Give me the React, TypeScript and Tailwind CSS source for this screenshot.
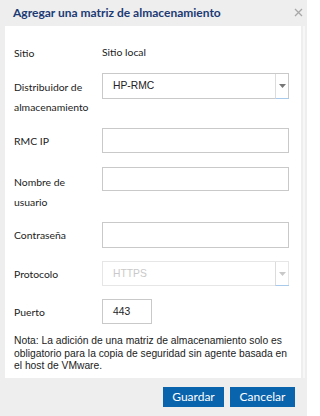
import React from "react";

const lbl = "w-[88px] shrink-0 text-[10.4px] leading-[20px] text-[#222]";
const inputCls = "w-[187px] border border-[#c9c9c9] bg-white";
const arial = { fontFamily: "'Liberation Sans', Arial, sans-serif" };

function Caret({ light }: { light?: boolean }) {
  return (
    <div className="w-[14px] self-stretch flex items-center justify-center border-l border-[#dcdcdc] border-b-[1px] border-b-[#a9c9ea] -mb-px -mr-px">
      <svg width="7" height="4" viewBox="0 0 7 4">
        <path d="M0 0 L7 0 L3.5 4 Z" fill={light ? "#c8c8c8" : "#777"} />
      </svg>
    </div>
  );
}

export default function App() {
  return (
    <div
      className="w-[307px] h-[416px] bg-[#eeeeee] flex flex-col overflow-hidden"
      style={{ fontFamily: "Lato, 'Liberation Sans', sans-serif" }}
    >
      <div className="h-[26px] flex items-center justify-between pl-[13px] pr-[4px]">
        <span className="text-[12px] font-bold text-[#1c3a74]">
          Agregar una matriz de almacenamiento
        </span>
        <svg width="9" height="9" viewBox="0 0 9 9" className="mb-[1px]">
          <path d="M1 1 L8 8 M8 1 L1 8" stroke="#a8a8a8" strokeWidth="1.3" />
        </svg>
      </div>
      <div className="flex flex-1">
        <div className="w-[5px] shrink-0" />
        <div className="w-[296px] h-[352px] bg-white pl-[9px] pt-[16px]">
          <div className="flex items-center h-[20px] mt-[1px]">
            <div className={lbl}>Sitio</div>
            <div className="text-[10.4px] text-[#222]">Sitio local</div>
          </div>

          <div className="flex items-start mt-[10px]">
            <div className={lbl + " pt-[4px]"}>
              Distribuidor de
              <br />
              almacenamiento
            </div>
            <div className={inputCls + " h-[26px] flex items-center"}>
              <span className="flex-1 pl-[10px] text-[10.3px] text-[#222]" style={arial}>HP-RMC</span>
              <Caret />
            </div>
          </div>

          <div className="flex items-start mt-[11px]">
            <div className={lbl + " pt-[3px]"}>RMC IP</div>
            <div className={inputCls + " h-[25px]"} />
          </div>

          <div className="flex items-start mt-[14px]">
            <div className={lbl + " pt-[5px] leading-[19px]"}>
              Nombre de
              <br />
              usuario
            </div>
            <div className={inputCls + " h-[24px]"} />
          </div>

          <div className="flex items-start mt-[10px]">
            <div className={lbl + " pt-[3px]"}>Contraseña</div>
            <div className={inputCls + " h-[26px]"} />
          </div>

          <div className="flex items-center mt-[13px]">
            <div className={lbl}>Protocolo</div>
            <div className="w-[187px] h-[25px] border border-[#e6e6e6] flex items-center">
              <span className="flex-1 pl-[10px] text-[10.3px] text-[#c9c9c9]" style={arial}>HTTPS</span>
              <Caret light />
            </div>
          </div>

          <div className="flex items-center mt-[13px]">
            <div className={lbl}>Puerto</div>
            <div className="w-[50px] h-[25px] border border-[#c9c9c9] flex items-center pl-[10px] text-[10.3px] text-[#222]" style={arial}>
              443
            </div>
          </div>

          <p className="mt-[11px] pr-[10px] text-[10.3px] leading-[12.5px] text-[#222]" style={arial}>
            Nota: La adición de una matriz de almacenamiento solo es obligatorio para la copia de seguridad sin agente basada en el host de VMware.
          </p>
        </div>
        <div className="w-[6px] shrink-0 flex">
          <div className="w-[2px]" />
          <div className="w-[2px] bg-[#f7f7f7]" />
        </div>
      </div>
      <div className="h-[38px] flex items-start justify-end gap-[6px] pr-[12px] pt-[9px]">
        <button className="w-[61px] h-[20px] bg-[#0a63ad] text-white text-[12px] leading-[20px]">Guardar</button>
        <button className="w-[65px] h-[20px] bg-[#0a63ad] text-white text-[12px] leading-[20px]">Cancelar</button>
      </div>
    </div>
  );
}
